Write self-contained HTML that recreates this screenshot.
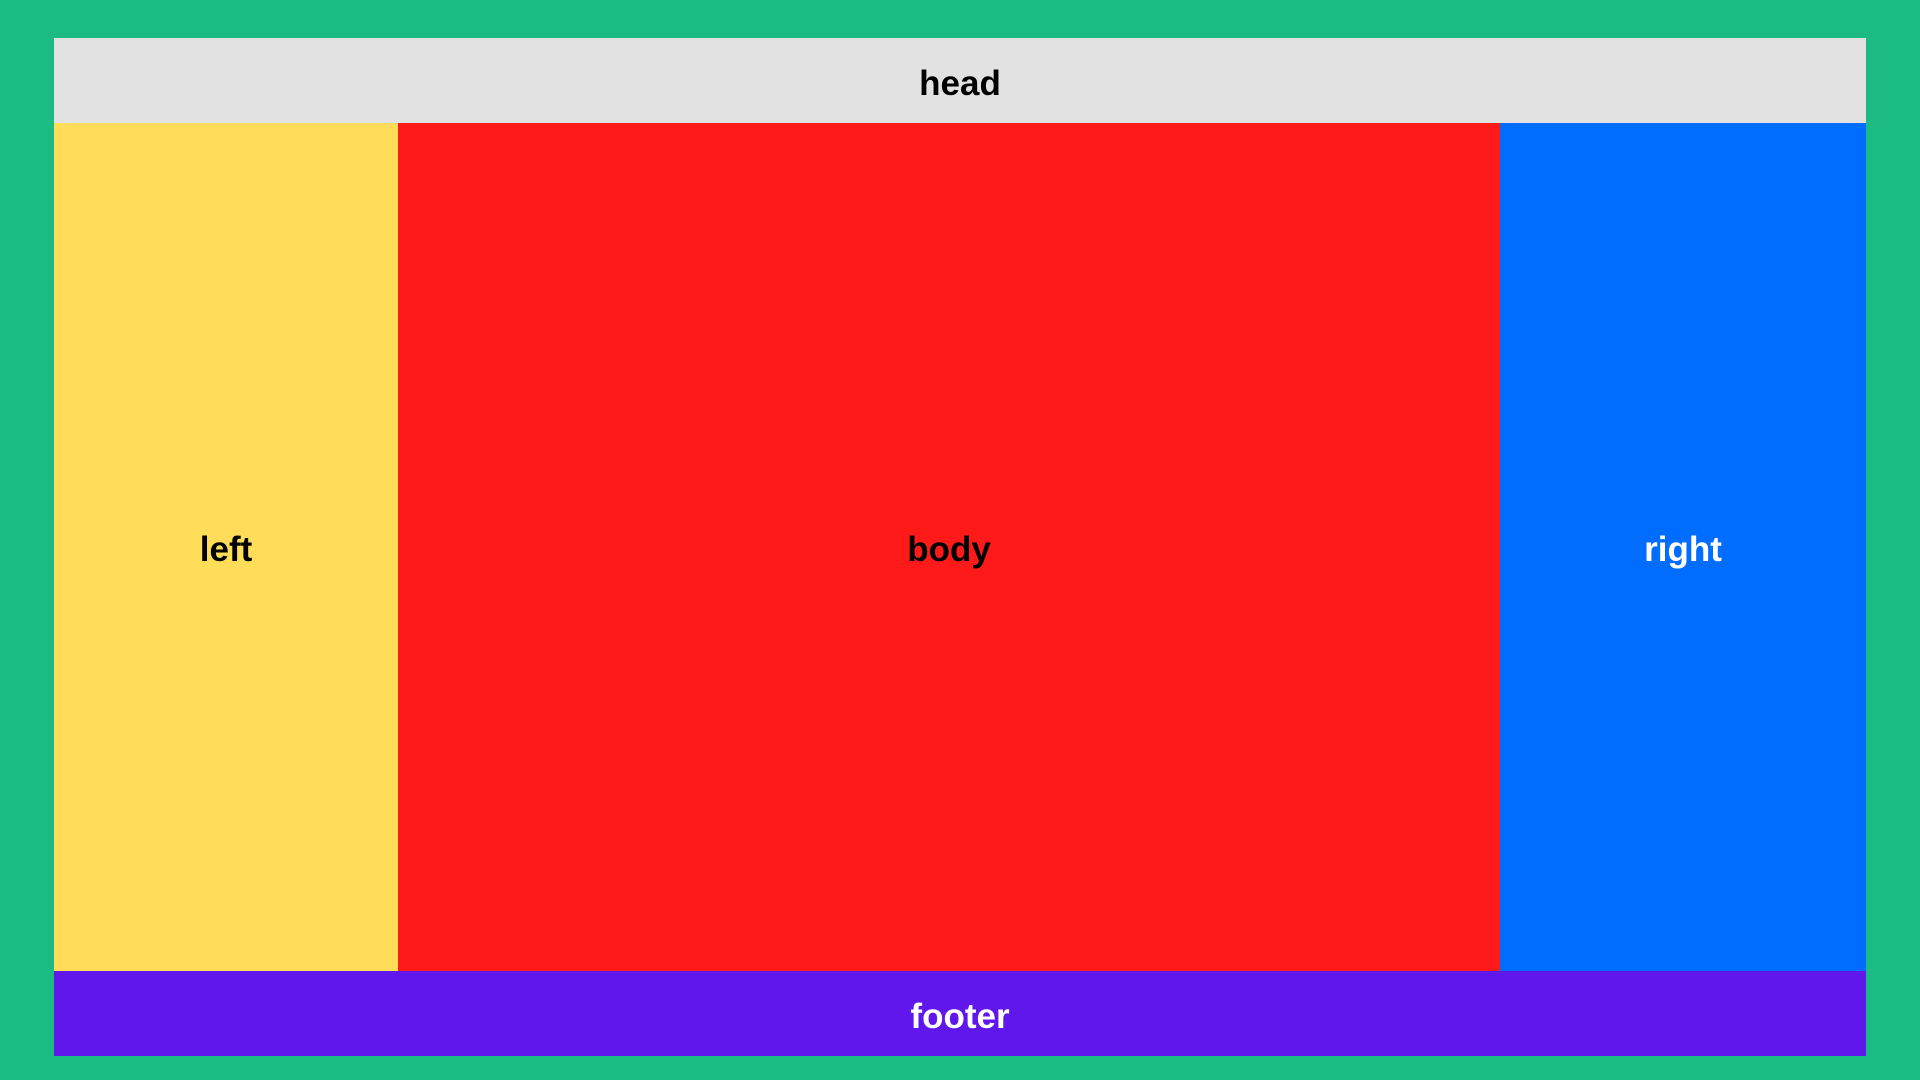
<!DOCTYPE html>
<html><head><meta charset="utf-8"><style>
html,body{margin:0;padding:0;width:1920px;height:1080px;background:#1dbb84;overflow:hidden}
.b{position:absolute;display:flex;align-items:center;justify-content:center;font-family:"Liberation Sans",sans-serif;font-weight:bold;font-size:35px;box-sizing:border-box;padding-top:6px}
</style></head><body>
<div class="b" style="left:54px;top:38px;width:1812px;height:85px;background:#e2e2e2;color:#000">head</div>
<div class="b" style="left:54px;top:123px;width:344px;height:848px;background:#ffdd59;color:#000">left</div>
<div class="b" style="left:398px;top:123px;width:1102px;height:848px;background:#ff1a1a;color:#000">body</div>
<div class="b" style="left:1500px;top:123px;width:366px;height:848px;background:#006dff;color:#fff">right</div>
<div class="b" style="left:54px;top:971px;width:1812px;height:85px;background:#5f17eb;color:#fff">footer</div>
</body></html>
